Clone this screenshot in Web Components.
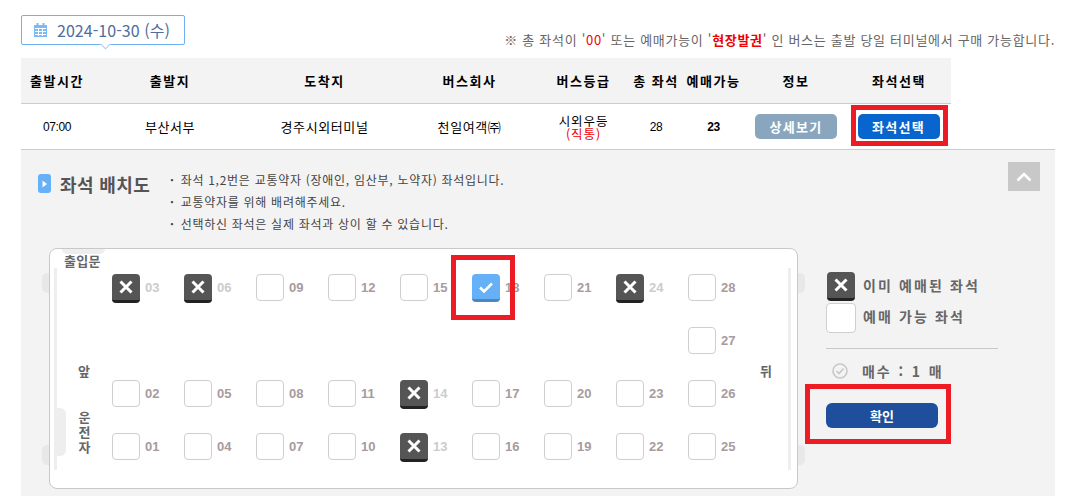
<!DOCTYPE html>
<html lang="ko">
<head>
<meta charset="utf-8">
<title>좌석 배치도</title>
<style>
    html, body { margin: 0; background: #fff; }
    body { font-family: "Noto Sans CJK KR", "Liberation Sans", sans-serif; font-size: 12px; color: #333; overflow: hidden; }
</style>
</head>
<body>
<bus-page></bus-page>

<script>
// Icons shared by the seat and the legend
const ICON_X = `<svg width="16" height="16" viewBox="0 0 16 16"><path d="M2.5 2.5l11 11M13.5 2.5l-11 11" stroke="#fff" stroke-width="3" fill="none"/></svg>`;
const ICON_CHECK = `<svg width="16" height="14" viewBox="0 0 16 14"><path d="M2 7.5l4 4 8-8" stroke="#fff" stroke-width="2.6" fill="none"/></svg>`;

// Red annotation frame drawn round a control
class RedMark extends HTMLElement {
    constructor() {
        super();
        this.attachShadow({ mode: 'open' });
    }
    connectedCallback() {
        this.shadowRoot.innerHTML = `
            <style>
                :host { display: inline-flex; border: 5px solid #ed1c24; box-sizing: border-box; background: var(--mark-bg, transparent); }
            </style>
            <slot></slot>
        `;
    }
}

// Date chip with a small pointer under it
class DateChip extends HTMLElement {
    constructor() {
        super();
        this.attachShadow({ mode: 'open' });
    }
    connectedCallback() {
        this.shadowRoot.innerHTML = `
            <style>
                :host { display: flex; position: relative; align-items: center; box-sizing: border-box; width: 164px; height: 30px; padding-left: 12px; gap: 10px; border: 1px solid #6fb1f1; border-radius: 2px; background: #fff; color: #4f6d9c; font-size: 16px; white-space: nowrap; letter-spacing: 0.05px; }
                :host::after { content: ""; position: absolute; left: 80px; bottom: -4px; width: 6px; height: 6px; background: #fff; border-right: 1px solid #a9d0f5; border-bottom: 1px solid #a9d0f5; transform: rotate(45deg); }
                svg { flex: none; }
            </style>
            <svg width="13" height="14" viewBox="0 0 13 14">
                <rect x="0" y="2" width="13" height="12" fill="#7dbaf5"/>
                <rect x="2.5" y="0" width="2" height="3" fill="#7dbaf5"/>
                <rect x="8.5" y="0" width="2" height="3" fill="#7dbaf5"/>
                <path d="M1 5.5h11M1 8.5h11M1 11.5h11M4.5 5v8M8.5 5v8" stroke="#fff" stroke-width="1" fill="none"/>
            </svg>
            <span><slot></slot></span>
        `;
    }
}

// Schedule table: header row and one bus row
class BusTable extends HTMLElement {
    constructor() {
        super();
        this.attachShadow({ mode: 'open' });
    }
    connectedCallback() {
        this.shadowRoot.innerHTML = `
            <style>
                :host { display: block; color: #000; }
                .head, .row { display: grid; width: 930px; box-sizing: border-box; grid-template-columns: 72px 154px 155px 135px 93px 52px 63px 102px 104px; }
                .head { height: 46px; background: #f3f3f3; border-bottom: 1px solid #ccc; font-weight: 700; font-size: 13px; letter-spacing: 1.5px; }
                .row { height: 45px; }
                .line { height: 46px; border-bottom: 1px solid #ccc; box-sizing: border-box; width: 1034px; }
                .cell { display: flex; flex-direction: column; align-items: center; justify-content: center; white-space: nowrap; min-width: 0; }
                .body { font-size: 13px; letter-spacing: 0.6px; }
                .num { font-family: "Liberation Sans", sans-serif; font-size: 12px; letter-spacing: -0.4px; }
                .grade { line-height: 13px; font-size: 12.5px; letter-spacing: 0.9px; }
                .grade b { font-weight: 400; color: #e00; }
                .btn { display: flex; align-items: center; justify-content: center; width: 82px; height: 25px; border-radius: 5px; color: #fff; font-weight: 700; font-size: 13px; letter-spacing: 1.3px; }
                .info { background: #8aa6bf; }
                .pick { background: #0865cd; }
                .marked { justify-content: flex-start; padding-top: 1px; }
                red-mark { padding: 4px 3px 2px 2px; --mark-bg: #fff; }
            </style>
            <div class="head">
                <div class="cell">출발시간</div><div class="cell">출발지</div><div class="cell">도착지</div>
                <div class="cell">버스회사</div><div class="cell">버스등급</div><div class="cell">총 좌석</div>
                <div class="cell">예매가능</div><div class="cell">정보</div><div class="cell">좌석선택</div>
            </div>
            <div class="line">
                <div class="row">
                    <div class="cell num">07:00</div>
                    <div class="cell body">부산서부</div>
                    <div class="cell body">경주시외터미널</div>
                    <div class="cell body">천일여객㈜</div>
                    <div class="cell grade">시외우등<b>(직통)</b></div>
                    <div class="cell num">28</div>
                    <div class="cell num"><b>23</b></div>
                    <div class="cell"><div class="btn info">상세보기</div></div>
                    <div class="cell marked"><red-mark><div class="btn pick">좌석선택</div></red-mark></div>
                </div>
            </div>
        `;
    }
}

// One seat: a box and its number. state is free, sold or picked
class BusSeat extends HTMLElement {
    constructor() {
        super();
        this.attachShadow({ mode: 'open' });
    }
    connectedCallback() {
        const state = this.getAttribute('state') || 'free';
        const icon = state === 'sold' ? ICON_X : state === 'picked' ? ICON_CHECK : '';
        const no = this.getAttribute('no');
        this.shadowRoot.innerHTML = `
            <style>
                :host { display: flex; position: relative; align-items: flex-start; gap: 5px; height: 30px; }
                .box { display: flex; align-items: center; justify-content: center; box-sizing: border-box; width: 28px; height: 27px; border-radius: 4px; border: 1px solid #cfcfcf; background: #fff; }
                .sold { height: 29px; border: 0; border-bottom: 3px solid #222; background: #555; }
                .picked { height: 28px; border: 0; border-bottom: 3px solid #4a86c0; background: #66b0f8; }
                .no { font: 700 13px/27px "Liberation Sans", sans-serif; color: #a79b9d; }
                .no.off { color: #c9cdcd; }
                .frame { position: absolute; left: -21px; top: -19px; width: 64px; height: 65px; border: 5px solid #ed1c24; box-sizing: border-box; }
            </style>
            <div class="box ${state}">${icon}</div>
            ${no ? `<div class="no ${state === 'sold' ? 'off' : ''}">${no}</div>` : ''}
            ${state === 'picked' ? '<div class="frame"></div>' : ''}
        `;
    }
}

// Bus floor plan: door and driver labels on the left, 28 seats in a grid
class SeatMap extends HTMLElement {
    constructor() {
        super();
        this.attachShadow({ mode: 'open' });
    }
    connectedCallback() {
        const sold = ['03', '06', '13', '14', '24'];
        const picked = ['18'];
        // [seat number, column, row]: each column counts up from the bottom, over the aisle row
        const seats = [];
        let no = 1;
        for (let col = 1; col <= 8; col++) {
            for (const row of [4, 3, 1]) {
                seats.push([no++, col, row]);
            }
        }
        seats.push([25, 9, 4], [26, 9, 3], [27, 9, 2], [28, 9, 1]);
        const seatHtml = seats.map(([n, col, row]) => {
            const id = String(n).padStart(2, '0');
            const state = sold.includes(id) ? 'sold' : picked.includes(id) ? 'picked' : 'free';
            return `<bus-seat no="${id}" state="${state}" style="grid-column:${col};grid-row:${row}"></bus-seat>`;
        }).join('');

        this.shadowRoot.innerHTML = `
            <style>
                :host { display: flex; position: relative; box-sizing: border-box; flex: none; width: 749px; height: 241px; background: #fff; border: 1px solid #c8c8c8; border-radius: 8px; color: #666; font-weight: 700; font-size: 13px; }
                .left { flex: none; width: 62px; display: flex; flex-direction: column; box-sizing: border-box; padding: 4px 0 0 14px; line-height: 16px; letter-spacing: 0.3px; }
                .front { margin: 94px 0 0 14px; }
                .driver { margin: 32px 0 0 13px; width: 14px; writing-mode: vertical-rl; text-orientation: upright; letter-spacing: 1.6px; line-height: 14px; }
                .seats { flex: none; width: 648px; display: grid; grid-template-columns: repeat(9, 72px); grid-template-rows: repeat(4, 53px); margin-top: 25px; }
                .back { margin-top: 114px; line-height: 16px; }
                .deco { position: absolute; background: #eee; }
                .bar-l { left: 4px; top: 19px; width: 3px; height: 202px; }
                .bar-r { left: 738px; top: 19px; width: 3px; height: 202px; }
                .tab-top { left: 12px; top: 0; width: 43px; height: 5px; border-radius: 0 0 6px 6px; }
                .tab-driver { left: 6px; top: 159px; width: 10px; height: 48px; border-radius: 0 6px 6px 0; }
                .ear { width: 7px; height: 20px; background: #e8e8e8; }
                .el { left: -8px; border-radius: 5px 0 0 5px; }
                .er { left: 748px; border-radius: 0 5px 5px 0; }
                .e1 { top: 24px; }
                .e2 { top: 196px; }
            </style>
            <div class="deco bar-l"></div><div class="deco bar-r"></div>
            <div class="deco tab-top"></div><div class="deco tab-driver"></div>
            <div class="deco ear el e1"></div><div class="deco ear el e2"></div>
            <div class="deco ear er e1"></div><div class="deco ear er e2"></div>
            <div class="left">
                <div>출입문</div>
                <div class="front">앞</div>
                <div class="driver">운전자</div>
            </div>
            <div class="seats">${seatHtml}</div>
            <div class="back">뒤</div>
        `;
    }
}

// Legend, ticket count and confirm button to the right of the plan
class SeatSide extends HTMLElement {
    constructor() {
        super();
        this.attachShadow({ mode: 'open' });
    }
    connectedCallback() {
        this.shadowRoot.innerHTML = `
            <style>
                :host { display: flex; flex-direction: column; flex: none; width: 172px; padding-top: 24px; color: #666; font-weight: 700; font-size: 14px; letter-spacing: 2.1px; white-space: nowrap; }
                .item { display: flex; align-items: center; gap: 8px; }
                .item span { margin-bottom: 3px; }
                .item .free + span { margin-left: -1px; }
                .mark { flex: none; box-sizing: border-box; display: flex; align-items: center; justify-content: center; }
                .sold { width: 28px; height: 29px; margin-left: 1px; background: #555; border-bottom: 3px solid #222; border-radius: 4px; }
                .free { width: 30px; height: 30px; margin-top: 2px; background: #fff; border: 1px solid #cfcfcf; border-radius: 4px; }
                hr { width: 172px; height: 1px; margin: 15px 0 13px; border: 0; background: #c8c8c8; }
                .count { display: flex; align-items: center; gap: 14px; padding-left: 6px; height: 18px; letter-spacing: 1.9px; word-spacing: 1px; }
                red-mark { align-self: flex-start; margin: 4px 0 0 -21px; padding: 14px 8px 11px 16px; }
                .ok { display: flex; align-items: center; justify-content: center; width: 112px; height: 25px; border-radius: 6px; background: #1f4f9c; color: #fff; font-size: 13px; letter-spacing: 0; }
            </style>
            <div class="item"><div class="mark sold">${ICON_X}</div><span>이미 예매된 좌석</span></div>
            <div class="item"><div class="mark free"></div><span>예매 가능 좌석</span></div>
            <hr>
            <div class="count">
                <svg width="16" height="16" viewBox="0 0 16 16"><circle cx="8" cy="8" r="7" fill="none" stroke="#c8c8c8" stroke-width="1.6"/><path d="M4.5 8l2.5 2.5 4.5-5" fill="none" stroke="#c8c8c8" stroke-width="1.6"/></svg>
                <span>매수 : 1 매</span>
            </div>
            <red-mark><div class="ok">확인</div></red-mark>
        `;
    }
}

// Grey panel under the bus row
class SeatPanel extends HTMLElement {
    constructor() {
        super();
        this.attachShadow({ mode: 'open' });
    }
    connectedCallback() {
        this.shadowRoot.innerHTML = `
            <style>
                :host { display: block; box-sizing: border-box; width: 1034px; height: 346px; padding: 12px 15px 0 17px; background: #f3f3f3; }
                .top { display: flex; height: 86px; }
                .title { display: flex; align-items: center; gap: 9px; height: 19px; margin-top: 12px; width: 132px; flex: none; color: #555; font-weight: 700; font-size: 18px; letter-spacing: 0.4px; white-space: nowrap; }
                .chip { flex: none; display: flex; align-items: center; justify-content: center; width: 13px; height: 19px; border-radius: 3px; background: #66b0f8; }
                ul { list-style: none; margin: 7px 0 0; padding: 0; color: #444; line-height: 22px; font-size: 12px; letter-spacing: 0.72px; white-space: nowrap; }
                li { display: flex; gap: 6px; }
                li::before { content: "·"; font-weight: 700; }
                .up { flex: none; display: flex; align-items: center; justify-content: center; width: 32px; height: 29px; margin-left: auto; background: #c8c8c8; }
                .bottom { display: flex; gap: 28px; margin-left: 11px; }
            </style>
            <div class="top">
                <div class="title">
                    <span class="chip"><svg width="6" height="8" viewBox="0 0 6 8"><path d="M0.5 0.5L5 4L0.5 7.5z" fill="#fff"/></svg></span>
                    <span>좌석 배치도</span>
                </div>
                <ul>
                    <li>좌석 1,2번은 교통약자 (장애인, 임산부, 노약자) 좌석입니다.</li>
                    <li>교통약자를 위해 배려해주세요.</li>
                    <li>선택하신 좌석은 실제 좌석과 상이 할 수 있습니다.</li>
                </ul>
                <div class="up"><svg width="16" height="10" viewBox="0 0 16 10"><path d="M1.5 8.5L8 2l6.5 6.5" fill="none" stroke="#fff" stroke-width="2.6"/></svg></div>
            </div>
            <div class="bottom">
                <seat-map></seat-map>
                <seat-side></seat-side>
            </div>
        `;
    }
}

// Whole page
class BusPage extends HTMLElement {
    constructor() {
        super();
        this.attachShadow({ mode: 'open' });
    }
    connectedCallback() {
        this.shadowRoot.innerHTML = `
            <style>
                :host { display: block; width: 1034px; margin-left: 21px; }
                .bar { display: flex; justify-content: space-between; height: 43px; padding-top: 15px; }
                .note { margin-top: 16px; color: #666; font-size: 13px; letter-spacing: 0.7px; white-space: nowrap; line-height: 18px; }
                .note b { color: #e00; font-weight: 400; }
                .note b.strong { font-weight: 700; }
            </style>
            <div class="bar">
                <date-chip>2024-10-30 (수)</date-chip>
                <div class="note">※ 총 좌석이 '<b>00</b>' 또는 예매가능이 '<b class="strong">현장발권</b>' 인 버스는 출발 당일 터미널에서 구매 가능합니다.</div>
            </div>
            <bus-table></bus-table>
            <seat-panel></seat-panel>
        `;
    }
}

// Children first so the nested markup upgrades straight away
customElements.define('red-mark', RedMark);
customElements.define('date-chip', DateChip);
customElements.define('bus-table', BusTable);
customElements.define('bus-seat', BusSeat);
customElements.define('seat-map', SeatMap);
customElements.define('seat-side', SeatSide);
customElements.define('seat-panel', SeatPanel);
customElements.define('bus-page', BusPage);
</script>
</body>
</html>
